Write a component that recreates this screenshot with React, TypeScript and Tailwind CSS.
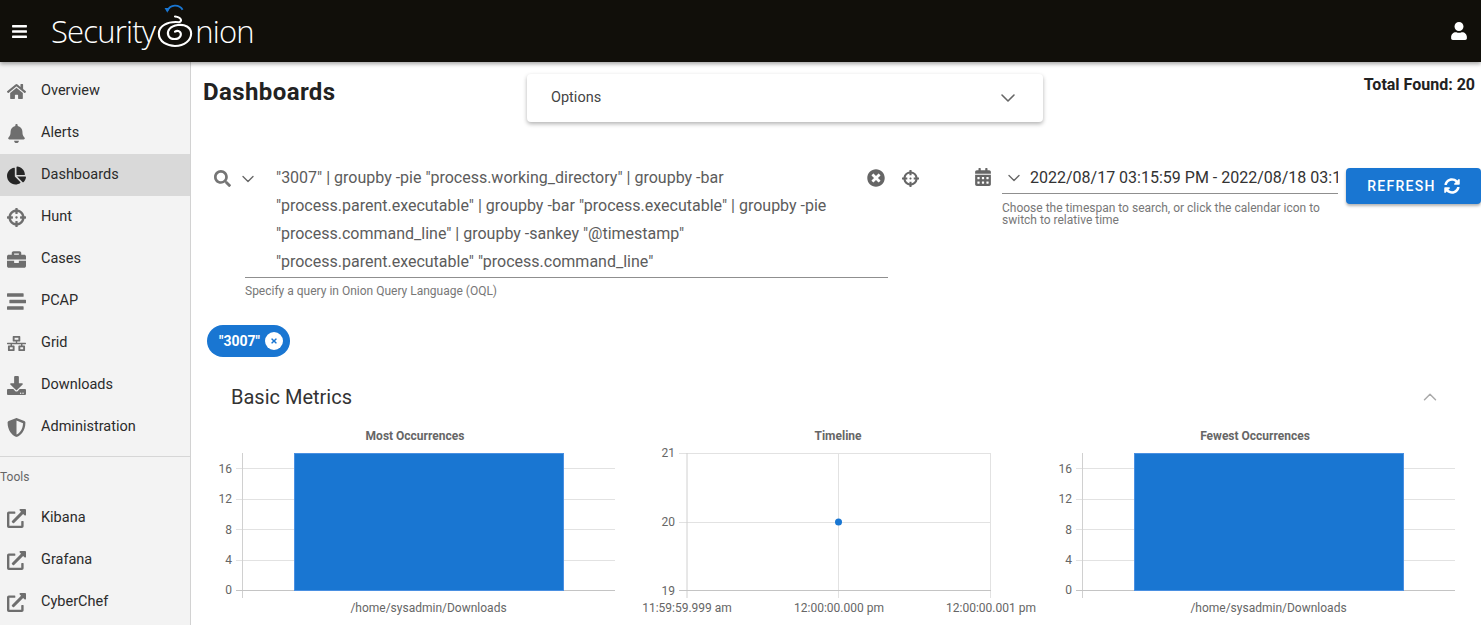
import { ChevronDown, ChevronUp } from "lucide-react";
import {
  FaBars,
  FaBell,
  FaBriefcase,
  FaCalendarAlt,
  FaChartPie,
  FaCrosshairs,
  FaDownload,
  FaExternalLinkAlt,
  FaHome,
  FaNetworkWired,
  FaSearch,
  FaShieldAlt,
  FaStream,
  FaSyncAlt,
  FaTimes,
  FaTimesCircle,
  FaUser,
} from "react-icons/fa";

const mainNav = [
  { label: "Overview", icon: FaHome },
  { label: "Alerts", icon: FaBell },
  { label: "Dashboards", icon: FaChartPie, active: true },
  { label: "Hunt", icon: FaCrosshairs },
  { label: "Cases", icon: FaBriefcase },
  { label: "PCAP", icon: FaStream },
  { label: "Grid", icon: FaNetworkWired },
  { label: "Downloads", icon: FaDownload },
  { label: "Administration", icon: FaShieldAlt },
];

const tools = ["Kibana", "Grafana", "CyberChef"];

function NavRow({ label, icon: Icon, active }: { label: string; icon: typeof FaHome; active?: boolean }) {
  return (
    <div className={`flex h-[42px] items-center pl-[7px] ${active ? "bg-[#d9d9d9]" : ""}`}>
      <span className="flex w-[34px] shrink-0 items-center">
        <Icon className={`h-[19px] w-[19px] ${active ? "text-[#262626]" : "text-[#6e6e6e]"}`} />
      </span>
      <span className="text-[14.5px] text-[#2b2b2b]">{label}</span>
    </div>
  );
}

function Logo() {
  return (
    <div className="ml-[23px] flex items-center text-[31px] font-light tracking-[-0.8px] text-white [font-family:'Open_Sans',sans-serif]">
      <span>Security</span>
      <svg viewBox="0 0 40 50" className="mx-[1px] h-[50px] w-[38px] -translate-y-[5px]" fill="none">
        <path d="M12 9 A9 9 0 0 1 28 8" stroke="#1976d2" strokeWidth="2" />
        <path d="M9 6 L14 6 L12 11 Z" fill="#1976d2" />
        <path
          d="M20 15 C27 16 28 20 24 21 C12 20 3 25 3 33 C3 42 12 46 20 46 C30 46 37 40 37 33 C37 26 30 23 23 24 C15 25 11 30 13 35 C15 40 24 40 26 35 C27 31 23 29 20 31"
          stroke="#fff"
          strokeWidth="2.2"
          strokeLinecap="round"
        />
      </svg>
      <span>nion</span>
    </div>
  );
}

function BarChart({ title }: { title: string }) {
  return (
    <svg viewBox="0 0 440 205" className="h-[205px] w-full" fontFamily="Roboto, sans-serif">
      <text x="215" y="21" textAnchor="middle" fontSize="12" fontWeight="700" fill="#666">
        {title}
      </text>
      {[49, 80, 110, 141].map((y) => (
        <line key={y} x1="36" x2="415" y1={y + 0.5} y2={y + 0.5} stroke="#e2e2e2" />
      ))}
      <line x1="42.5" x2="42.5" y1="34" y2="179" stroke="#d0d0d0" />
      <line x1="36" x2="415" y1="171.5" y2="171.5" stroke="#c4c4c4" />
      <rect x="94.5" y="34.5" width="269" height="137" fill="#1976d2" stroke="#4a90e2" />
      {[
        ["16", 54],
        ["12", 84],
        ["8", 115],
        ["4", 145],
        ["0", 175],
      ].map(([t, y]) => (
        <text key={t} x="32" y={y} textAnchor="end" fontSize="12" fill="#666">
          {t}
        </text>
      ))}
      <text x="228.5" y="193" textAnchor="middle" fontSize="12" fill="#666">
        /home/sysadmin/Downloads
      </text>
    </svg>
  );
}

function TimelineChart() {
  return (
    <svg viewBox="0 0 400 205" className="h-[205px] w-full" fontFamily="Roboto, sans-serif">
      <text x="198" y="21" textAnchor="middle" fontSize="12" fontWeight="700" fill="#666">
        Timeline
      </text>
      <line x1="39" x2="351" y1="34.5" y2="34.5" stroke="#e2e2e2" />
      <line x1="39" x2="351" y1="103.5" y2="103.5" stroke="#e2e2e2" />
      <line x1="198.5" x2="198.5" y1="34" y2="179" stroke="#e2e2e2" />
      <line x1="350.5" x2="350.5" y1="34" y2="179" stroke="#e2e2e2" />
      <line x1="47" x2="47" y1="34" y2="179" stroke="#d0d0d0" />
      <line x1="39" x2="351" y1="171.5" y2="171.5" stroke="#c4c4c4" />
      <circle cx="198.5" cy="103" r="3.5" fill="#1976d2" />
      {[
        ["21", 38],
        ["20", 107],
        ["19", 176],
      ].map(([t, y]) => (
        <text key={t} x="35" y={y} textAnchor="end" fontSize="12" fill="#666">
          {t}
        </text>
      ))}
      {[
        ["11:59:59.999 am", 47],
        ["12:00:00.000 pm", 199],
        ["12:00:00.001 pm", 351],
      ].map(([t, x]) => (
        <text key={t} x={x} y="193" textAnchor="middle" fontSize="12" fill="#666">
          {t}
        </text>
      ))}
    </svg>
  );
}

export default function App() {
  return (
    <div className="flex h-[625px] flex-col overflow-hidden bg-white [font-family:Roboto,sans-serif]">
      <header className="relative z-10 flex h-[62px] shrink-0 items-center bg-[#110f0a] shadow-[0_2px_4px_rgba(0,0,0,0.35)]">
        <FaBars className="ml-[11px] h-[17px] w-[17px] text-white" />
        <Logo />
        <FaUser className="ml-auto mr-[13px] h-[18px] w-[18px] text-white" />
      </header>

      <div className="flex min-h-0 flex-1">
        <aside className="w-[191px] shrink-0 border-r border-[#d2d2d2] bg-[#f3f3f3] pt-[8px]">
          {mainNav.map((item) => (
            <NavRow key={item.label} {...item} />
          ))}
          <div className="mt-[8px] border-t border-[#d6d6d6] pt-[13px] pb-[13px] text-[12px] leading-[14px] text-[#666]">
            Tools
          </div>
          {tools.map((t) => (
            <NavRow key={t} label={t} icon={FaExternalLinkAlt} />
          ))}
        </aside>

        <main className="min-w-0 flex-1">
          <div className="flex h-[92px] items-start">
            <h1 className="ml-[12px] mt-[16px] w-[324px] text-[24px] font-bold leading-[28px] tracking-[0.4px] text-[#222]">
              Dashboards
            </h1>
            <div className="mt-[12px] flex h-[48px] w-[516px] items-center justify-between rounded-[4px] pl-[24px] pr-[23px] shadow-[0_2px_4px_rgba(0,0,0,0.3)]">
              <span className="text-[14.5px] text-[#444]">Options</span>
              <ChevronDown className="h-[24px] w-[24px] text-[#666]" strokeWidth={1.6} />
            </div>
            <div className="ml-auto mr-[6px] mt-[14px] text-[16px] font-bold leading-[18px] text-[#222]">
              Total Found: 20
            </div>
          </div>

          <div className="flex h-[171px] items-start">
            <FaSearch className="ml-[23px] mt-[16px] h-[17px] w-[17px] shrink-0 text-[#757575]" />
            <ChevronDown className="ml-[7px] mt-[15px] h-[20px] w-[20px] shrink-0 text-[#666]" strokeWidth={1.6} />
            <div className="ml-[-13px] w-[646px]">
              <div className="border-b border-[#8f8f8f] pb-[1px] pl-[31px] text-[16px] leading-[28px] text-[#5c5c5c]">
                <div className="mt-[10px] w-[590px]">
                  "3007" | groupby -pie "process.working_directory" | groupby -bar "process.parent.executable" | groupby
                  -bar "process.executable" | groupby -pie "process.command_line" | groupby -sankey "@timestamp"
                  "process.parent.executable" "process.command_line"
                </div>
              </div>
              <div className="mt-[6px] text-[12px] leading-[14px] text-[#777]">
                Specify a query in Onion Query Language (OQL)
              </div>
            </div>
            <FaTimesCircle className="ml-[-21px] mt-[15px] h-[18px] w-[18px] shrink-0 text-[#666]" />
            <FaCrosshairs className="ml-[17px] mt-[16px] h-[17px] w-[17px] shrink-0 text-[#666]" />
            <FaCalendarAlt className="ml-[56px] mt-[14px] h-[18px] w-[16px] shrink-0 text-[#666]" />
            <div className="ml-[11px] w-[336px] shrink-0">
              <div className="flex h-[40px] items-center border-b border-[#8f8f8f] pt-[8px]">
                <ChevronDown className="h-[20px] w-[24px] shrink-0 text-[#666]" strokeWidth={1.6} />
                <span className="ml-[4px] overflow-hidden text-[16px] whitespace-nowrap text-[#333]">
                  2022/08/17 03:15:59 PM - 2022/08/18 03:15:59 PM
                </span>
              </div>
              <div className="mt-[8px] text-[12px] leading-[12px] text-[#777]">
                Choose the timespan to search, or click the calendar icon to switch to relative time
              </div>
            </div>
            <button className="ml-[8px] mt-[14px] flex h-[36px] w-[135px] shrink-0 items-center justify-center gap-[8px] rounded-[4px] bg-[#1976d2] text-[14px] font-medium tracking-[1.3px] text-white shadow-[0_2px_3px_rgba(0,0,0,0.3)]">
              REFRESH
              <FaSyncAlt className="h-[16px] w-[16px]" />
            </button>
          </div>

          <div className="ml-[16px] inline-flex h-[32px] items-center rounded-full bg-[#1976d2] pl-[12px] pr-[7px] text-[14px] font-bold text-white">
            "3007"
            <span className="ml-[5px] flex h-[18px] w-[18px] items-center justify-center rounded-full bg-white">
              <FaTimes className="h-[8px] w-[8px] text-[#1976d2]" />
            </span>
          </div>

          <div className="mt-[22px] flex h-[36px] items-center justify-between pl-[40px] pr-[40px]">
            <span className="text-[20px] text-[#333]">Basic Metrics</span>
            <ChevronUp className="h-[22px] w-[22px] text-[#aaa]" strokeWidth={1.6} />
          </div>

          <div className="mt-[4px] flex pl-[9px]">
            <div className="w-[440px]">
              <BarChart title="Most Occurrences" />
            </div>
            <div className="w-[400px]">
              <TimelineChart />
            </div>
            <div className="w-[440px] -translate-x-[0px]">
              <BarChart title="Fewest Occurrences" />
            </div>
          </div>
        </main>
      </div>
    </div>
  );
}
